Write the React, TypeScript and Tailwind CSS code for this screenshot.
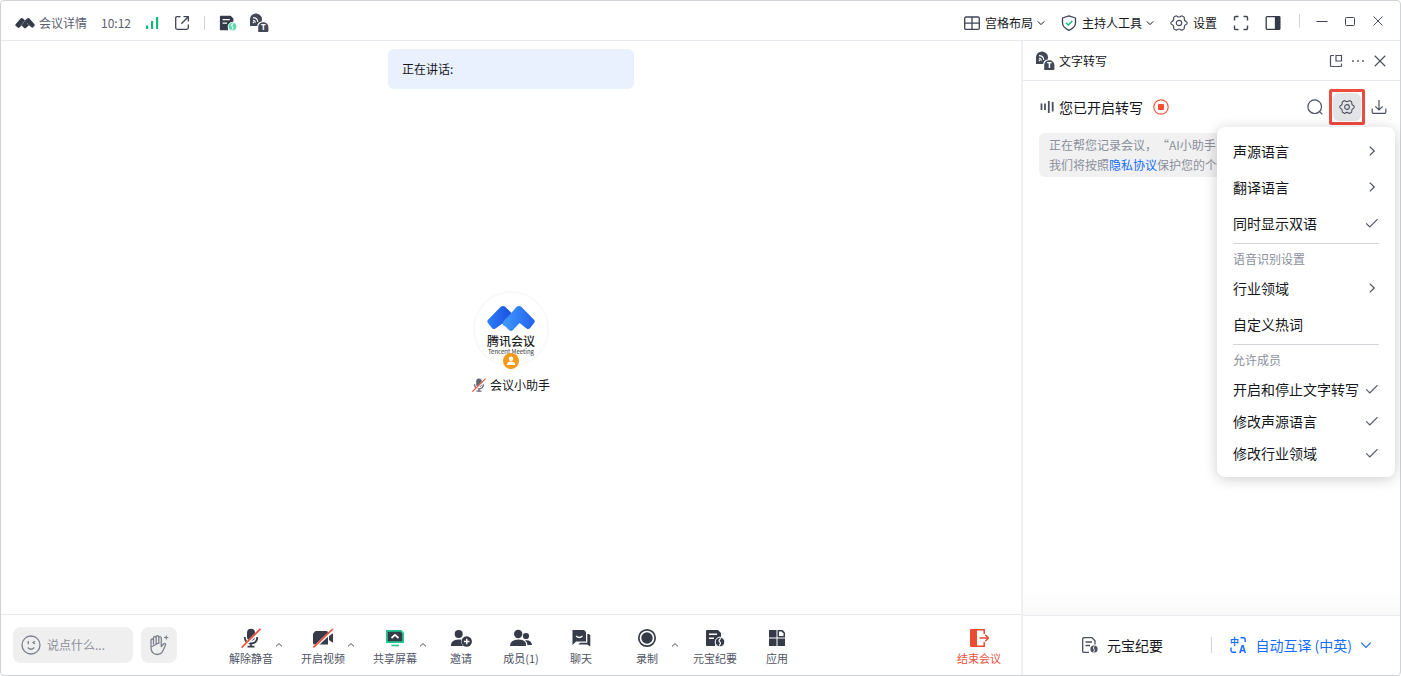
import React from "react";

type IconProps = { className?: string };

function Chevron({ dir = "down", className = "size-2" }: { dir?: "down" | "up" | "right"; className?: string }) {
  const paths = { down: "M0.8 2.4 4 5.6 7.2 2.4", up: "M1 5.4 4 2.6 7 5.4", right: "M2.2 0.5 5.8 4 2.2 7.5" };
  return (
    <svg viewBox="0 0 8 8" className={className} fill="none" stroke="currentColor" strokeWidth="1" aria-hidden="true">
      <path d={paths[dir]} />
    </svg>
  );
}

function Check() {
  return (
    <svg viewBox="0 0 14 14" className="size-3.5" fill="none" stroke="#4e5366" strokeWidth="1.1" aria-hidden="true">
      <path d="M1.2 7.4 4.8 11 12.6 3.2" />
    </svg>
  );
}

function BrandMark() {
  return (
    <svg viewBox="0 0 20 12" className="h-3 w-5" fill="#363b4a" aria-hidden="true">
      <path d="M5.600 1.500Q6.800.3 8 1.500L10 3.600 12 1.500Q13.200.3 14.400 1.500L19.500 7.200Q20.100 8 19.400 8.800L18.200 10.300Q17.300 11.200 16.400 10.300L14 8.200 10.900 11Q10 11.800 9.100 11L6.600 8.600 4.400 10.500Q3.400 11.300 2.600 10.500L.6 8.800Q-.1 8 .6 7.200Z" />
      <path d="M10 3.600 6.200 8.400M14 8.200 12 6" stroke="#fff" strokeWidth=".5" opacity=".6" />
    </svg>
  );
}

function SignalIcon() {
  return (
    <svg viewBox="0 0 15 14" className="h-3.5 w-[15px]" fill="#16b878" aria-hidden="true">
      <rect x="1" y="9.500" width="2.200" height="3.500" />
      <rect x="6" y="5" width="2.200" height="8" />
      <rect x="11" y="1" width="2.200" height="12" />
    </svg>
  );
}

function ShareOutIcon() {
  return (
    <svg viewBox="0 0 16 16" className="size-4" fill="none" stroke="#3f4454" strokeWidth="1.3" aria-hidden="true">
      <path d="M6.500 1.700H3.200Q1.700 1.700 1.700 3.200V12.800Q1.700 14.300 3.200 14.300H12.800Q14.300 14.300 14.300 12.800V9.500" />
      <path d="M9.500 1.700H14.300V6.500M14.300 1.700 7.300 8.700" />
    </svg>
  );
}

function NotesIcon({ accent = "#363b4a", className = "size-5" }: { accent?: string; className?: string }) {
  return (
    <svg viewBox="0 0 20 20" className={className} aria-hidden="true">
      <path d="M2 2H13L16 5V9Q10 9 10 18H2Q1 18 1 17V3Q1 2 2 2Z" fill="#363b4a" />
      <path d="M4 6.200H12M4 10.200H9" stroke="#fff" strokeWidth="1.400" />
      <circle cx="15" cy="14" r="4.800" fill={accent} stroke="#fff" strokeWidth="1" />
      <path d="M16 10.500Q12.800 12.300 14.800 14Q16.500 15.500 14 17.500" fill="none" stroke="#fff" strokeWidth="1.200" />
    </svg>
  );
}

function NotesOutlineIcon() {
  return (
    <svg viewBox="0 0 18 18" className="size-[18px]" fill="none" stroke="#4b5060" strokeWidth="1.300" aria-hidden="true">
      <path d="M8 16.300H2.700Q1.700 16.300 1.700 15.300V2.700Q1.700 1.700 2.700 1.700H11L14 4.700V8.500M4.500 6H11M4.500 9.500H9" />
      <circle cx="13" cy="13" r="3.600" fill="#4b5060" stroke="none" />
      <path d="M13.300 10.200Q11.500 12 13 13.200Q14 14.500 12.500 16" stroke="#fff" strokeWidth="1" />
    </svg>
  );
}

function TranscribeIcon({ className = "size-5" }: IconProps) {
  return (
    <svg viewBox="0 0 20 20" className={className} aria-hidden="true">
      <path d="M1 13V7A6 6 0 1 1 12.600 8.500Q8.500 9 8.200 13Z" fill="#434857" />
      <path d="M4 4.600Q8.500 4.600 8.800 9M4 7.300Q6.200 7.300 6.400 9.600" fill="none" stroke="#fff" strokeWidth="1.100" />
      <circle cx="4.500" cy="9.400" r=".8" fill="#fff" />
      <path d="M9.200 19V14A5 5 0 0 1 14.200 9.200A5 5 0 0 1 19.400 14V18Q19.400 19 18.400 19Z" fill="#434857" />
      <text x="14.300" y="17.300" fontSize="8" fontWeight="700" textAnchor="middle" fill="#fff" fontFamily="Noto Sans, sans-serif">T</text>
    </svg>
  );
}

function GearIcon({ className = "size-[18px]" }: IconProps) {
  return (
    <svg viewBox="0 0 18 18" className={className} fill="none" stroke="#4b5060" strokeWidth="1.200" strokeLinejoin="round" aria-hidden="true">
      <path d="M5.800 2 Q6.500 1.600 7 2.200 Q9 3.800 11 2.200 Q11.500 1.600 12.200 2 L14 3.100 Q14.500 3.500 14.300 4.200 Q14 6.800 16.400 7.700 Q17.100 8 17.100 9 Q17.100 10 16.400 10.300 Q14 11.200 14.300 13.800 Q14.500 14.500 14 14.900 L12.200 16 Q11.500 16.400 11 15.800 Q9 14.200 7 15.800 Q6.500 16.400 5.800 16 L4 14.900 Q3.500 14.500 3.700 13.800 Q4 11.200 1.600 10.300 Q.9 10 .9 9 Q.9 8 1.600 7.700 Q4 6.800 3.700 4.200 Q3.500 3.500 4 3.100Z" />
      <circle cx="9" cy="9" r="2.700" />
    </svg>
  );
}

function GridIcon() {
  return (
    <svg viewBox="0 0 16 16" className="size-4" fill="none" stroke="#3f4454" strokeWidth="1.300" aria-hidden="true">
      <rect x=".7" y="2" width="14.600" height="12.300" rx="1.200" />
      <path d="M8 2V14.300M.7 8.100H15.300" />
    </svg>
  );
}

function ShieldIcon() {
  return (
    <svg viewBox="0 0 16 16" className="size-4" fill="none" aria-hidden="true">
      <path d="M8 .9 14.500 3V8Q14.500 12.500 8 15.300Q1.500 12.500 1.500 8V3Z" stroke="#3f4454" strokeWidth="1.300" strokeLinejoin="round" />
      <path d="M5 7.700 7.300 10 11.300 6" stroke="#16b878" strokeWidth="1.400" />
    </svg>
  );
}

function MicOffIcon({ className = "size-5", body = "#363b4a" }: { className?: string; body?: string }) {
  return (
    <svg viewBox="0 0 20 20" className={className} fill="none" aria-hidden="true">
      <rect x="6" y=".8" width="8" height="12" rx="4" fill={body} />
      <path d="M3.700 9Q4 15.500 10 15.500T16.300 9M10 15.500V19M6.500 18.700H13.500" stroke={body} strokeWidth="1.800" />
      <path d="M1 20 19.700 1.800" stroke="#fff" strokeWidth="3" />
      <path d="M.6 19.500 19.500 .8" stroke="#f04e37" strokeWidth="1.700" />
    </svg>
  );
}

function CameraOffIcon() {
  return (
    <svg viewBox="0 0 22 20" className="h-5 w-[22px]" fill="none" aria-hidden="true">
      <path d="M3.500 3H14.500Q16 3 16 4.500V16.500H2.500Q1 16.500 1 15V5.500Z" fill="#363b4a" />
      <path d="M17 8 20.500 5.500Q21 5.500 21 6V14.200Q21 14.800 20.500 14.500L17 12Z" fill="#363b4a" />
      <path d="M2 19.800 21.300 1.500" stroke="#fff" strokeWidth="3" />
      <path d="M1.500 19.300 20.800 1" stroke="#f04e37" strokeWidth="1.700" />
    </svg>
  );
}

function ScreenIcon() {
  return (
    <svg viewBox="0 0 20 20" className="size-5" fill="none" aria-hidden="true">
      <path d="M1.900 2.900H16L18.100 5V14.100H1.900Z" fill="#363b4a" stroke="#23c98a" strokeWidth="1.800" />
      <path d="M6.500 10 10 6.800 13.500 10" stroke="#fff" strokeWidth="1.700" />
      <path d="M6.500 17.500H14" stroke="#23c98a" strokeWidth="1.600" />
    </svg>
  );
}

function InviteIcon() {
  return (
    <svg viewBox="0 0 22 20" className="h-5 w-[22px]" fill="#363b4a" aria-hidden="true">
      <circle cx="8.700" cy="6" r="4" />
      <path d="M.8 18Q.8 11.500 8.500 11.500H11Q10.800 16 13 18Z" />
      <circle cx="16.700" cy="13.500" r="5.200" />
      <path d="M16.700 10.700V16.300M13.900 13.500H19.500" stroke="#fff" strokeWidth="1.500" />
    </svg>
  );
}

function MembersIcon() {
  return (
    <svg viewBox="0 0 22 20" className="h-5 w-[22px]" fill="#363b4a" aria-hidden="true">
      <circle cx="8.200" cy="6" r="4.200" />
      <path d="M0 18Q0 11.500 8.500 11.500T16 18Z" />
      <circle cx="16" cy="8" r="3.100" />
      <path d="M15 12.400Q21.500 11.700 22 17H17.500Q17.500 14 15 12.400Z" />
    </svg>
  );
}

function ChatIcon() {
  return (
    <svg viewBox="0 0 20 20" className="size-5" fill="#363b4a" aria-hidden="true">
      <path d="M1.500 2H13L15 4V13.500H5L1.500 17Z" />
      <path d="M5 8Q8.200 11 11.500 8" fill="none" stroke="#fff" strokeWidth="1.300" />
      <path d="M16.300 6H18L19.300 7.300V18.500L16.200 16.500H7.500L9 14.800H16.300Z" />
    </svg>
  );
}

function RecordIcon() {
  return (
    <svg viewBox="0 0 20 20" className="size-5" fill="none" aria-hidden="true">
      <circle cx="10" cy="10" r="8.200" stroke="#363b4a" strokeWidth="1.700" />
      <circle cx="10" cy="10" r="5.700" fill="#363b4a" />
    </svg>
  );
}

function AppsIcon() {
  return (
    <svg viewBox="0 0 20 20" className="size-5" fill="#363b4a" aria-hidden="true">
      <path d="M2 2H9.500V9.500H2ZM2 10.500H9.500V18H2ZM10.500 10.500H18V18H10.500Z" />
      <path d="M10.500 2H15.500L18 4.500V9.500H10.500Z" />
      <path d="M12 3.500H14.500L16.500 5.500V8H12Z" fill="#fff" />
    </svg>
  );
}

function LeaveIcon() {
  return (
    <svg viewBox="0 0 20 20" className="size-5" fill="none" aria-hidden="true">
      <path d="M8 1V19H2Q1 19 1 18V2Q1 1 2 1Z" fill="#ec4b33" />
      <path d="M7 1.800H15.200V6M15.200 14V18.200H7" stroke="#ec4b33" strokeWidth="1.500" />
      <path d="M10.500 10H19.500M16.300 6.800 19.500 10 16.300 13.200" stroke="#ec4b33" strokeWidth="1.500" />
    </svg>
  );
}

function SmileIcon() {
  return (
    <svg viewBox="0 0 20 20" className="size-5" fill="none" stroke="#7d818d" strokeWidth="1.300" aria-hidden="true">
      <circle cx="10" cy="10" r="9" />
      <path d="M7.300 6V9.300M14 6.200 12 7.600 14 9M6.800 12.500Q10 16 13.300 12.500" />
    </svg>
  );
}

function HandIcon() {
  return (
    <svg viewBox="0 0 20 22" className="h-[22px] w-5" fill="none" stroke="#7d818d" strokeWidth="1.300" strokeLinejoin="round" aria-hidden="true">
      <path d="M2 13V6.500Q2 5 3.200 5T4.500 6.500V10.500M4.500 10V4Q4.500 2.500 5.800 2.500T7.200 4V10M7.200 9V3Q7.200 1.700 8.500 1.700T9.800 3V10M9.800 9V4Q9.800 2.800 11 2.800T12.300 4V12.500L14.800 9.800Q15.800 8.900 16.500 9.800Q17 10.500 16.300 11.500L13.500 17.500Q11.800 20.500 8.500 20.500Q2 20.500 2 13Z" />
      <path d="M17.200 .8 17.900 2.800 19.900 3.500 17.900 4.200 17.200 6.200 16.500 4.200 14.500 3.500 16.500 2.800Z" fill="#7d818d" stroke="none" />
    </svg>
  );
}

function TranslateIcon() {
  return (
    <svg viewBox="0 0 18 18" className="size-[18px] overflow-visible" aria-hidden="true">
      <text x="1" y="8.500" fontSize="9" fontWeight="700" fill="#146dff" fontFamily="Noto Sans CJK SC, sans-serif">中</text>
      <text x="10" y="17" fontSize="10" fontWeight="700" fill="#146dff" fontFamily="Noto Sans, sans-serif">A</text>
      <path d="M11.500 1.800H14.500Q16.200 1.800 16.200 3.500V6M2 11.500V14.500Q2 16.200 3.700 16.200H7" fill="none" stroke="#146dff" strokeWidth="1.400" />
    </svg>
  );
}

function CloseIcon({ className = "size-3" }: IconProps) {
  return (
    <svg viewBox="0 0 12 12" className={className} fill="none" stroke="#4b5060" strokeWidth="1" aria-hidden="true">
      <path d="M1.500 1.500 10.500 10.500M10.500 1.500 1.500 10.500" />
    </svg>
  );
}

function TitleBar() {
  return (
    <header className="flex h-10 shrink-0 items-center justify-between border-b border-[#e8e8ee] pl-3.5 pr-4 pt-1">
      <div className="flex items-center gap-3.5">
        <button className="flex items-center gap-1 text-[#5b6070]"><BrandMark />会议详情</button>
        <span className="text-[#5b6070]">10:12</span>
        <SignalIcon />
        <button aria-label="分享"><ShareOutIcon /></button>
        <span className="h-3.5 w-px bg-[#d3d5da]" />
        <div className="flex items-center gap-3">
          <button aria-label="元宝纪要"><NotesIcon accent="#5fd9ae" className="size-[18px]" /></button>
          <button aria-label="文字转写"><TranscribeIcon /></button>
        </div>
      </div>
      <div className="flex items-center gap-[18px]">
        <div className="flex items-center gap-4">
          <button className="flex items-center gap-[5px]"><GridIcon /><span className="flex items-center gap-1">宫格布局<Chevron /></span></button>
          <button className="flex items-center gap-[5px]"><ShieldIcon /><span className="flex items-center gap-1">主持人工具<Chevron /></span></button>
          <button className="flex items-center gap-[5px]"><GearIcon />设置</button>
          <button aria-label="全屏">
            <svg viewBox="0 0 16 16" className="size-4" fill="none" stroke="#3f4454" strokeWidth="1.400">
              <path d="M5.500 1.500H2.500Q1.500 1.500 1.500 2.500V5.500M10.500 1.500H13.500Q14.500 1.500 14.500 2.500V5.500M14.500 10.500V13.500Q14.500 14.500 13.500 14.500H10.500M1.500 10.500V13.500Q1.500 14.500 2.500 14.500H5.500" />
            </svg>
          </button>
          <button aria-label="侧边栏">
            <svg viewBox="0 0 16 16" className="size-4" fill="none" stroke="#363b4a" strokeWidth="1.300">
              <rect x="1.200" y="1.700" width="13.600" height="12.600" rx=".8" />
              <path d="M10.500 2H14.500V14H10.500Z" fill="#363b4a" />
            </svg>
          </button>
        </div>
        <div className="flex items-center gap-4 pb-1">
          <span className="h-3.5 w-px bg-[#d3d5da]" />
          <button aria-label="最小化">
            <svg viewBox="0 0 12 12" className="size-3" stroke="#3f4454"><path d="M.5 6.500H11.500" /></svg>
          </button>
          <button aria-label="最大化">
            <svg viewBox="0 0 12 12" className="size-3" fill="none" stroke="#3f4454"><rect x="1.500" y="2.500" width="9" height="8" rx="1" /></svg>
          </button>
          <button aria-label="关闭"><CloseIcon /></button>
        </div>
      </div>
    </header>
  );
}

function Stage() {
  return (
    <main className="flex flex-1 flex-col items-center pt-2">
      <div className="h-10 w-[246px] rounded-md bg-[#e9f1fe] px-3.5 leading-10">正在讲话:</div>
      <div className="flex flex-1 flex-col items-center justify-center gap-2.5 pb-5">
        <div className="relative flex size-[76px] flex-col items-center rounded-full border-2 border-[#f9f9fa] pt-3">
          <svg viewBox="0 0 48 28" className="h-7 w-12 shrink-0" aria-hidden="true">
            <defs>
              <linearGradient id="peakLeft" x1="0" y1="0" x2="1" y2="0"><stop offset="0" stopColor="#2f80fb" /><stop offset="1" stopColor="#1950de" /></linearGradient>
              <linearGradient id="peakRight" x1="0" y1="0" x2="1" y2="0"><stop offset="0" stopColor="#409afc" /><stop offset="1" stopColor="#2360ec" /></linearGradient>
            </defs>
            <path d="M14 1.500Q16 .3 18 1.500L24 7.500V16L17 21 15.500 18.500 8.500 23.500Q6.500 24.800 5 23.300L.8 17.800Q-.3 16.300 1 14.700Z" fill="url(#peakLeft)" />
            <path d="M30 1.500Q32 .3 34 1.500L47 14.700Q48.300 16.300 47.200 17.800L43 23.300Q41.500 24.800 39.500 23.500L32.500 18 26 25Q24 26.800 22 25L16.500 19.500Q15.500 18 16.800 16Z" fill="url(#peakRight)" />
          </svg>
          <span className="text-xs leading-4 font-medium text-[#222]">腾讯会议</span>
          <span className="text-[6px] leading-[6px] whitespace-nowrap text-[#333]">Tencent Meeting</span>
          <span className="absolute -bottom-1 left-1/2 flex size-4 -translate-x-1/2 items-center justify-center rounded-full bg-[#f39a1b]">
            <svg viewBox="0 0 10 10" className="size-2.5" fill="#fff" aria-hidden="true">
              <circle cx="5" cy="2.700" r="2.200" />
              <path d="M.8 9Q.8 5.600 5 5.600T9.200 9Z" />
            </svg>
          </span>
        </div>
        <div className="flex items-center gap-1 leading-4"><MicOffIcon className="size-3.5" body="#5f6472" />会议小助手</div>
      </div>
    </main>
  );
}

function Tool({ icon, label, width = "w-[60px]", menu = false }: { icon: React.ReactNode; label: string; width?: string; menu?: boolean }) {
  if (menu) {
    return (
      <div className="flex w-[72px] items-center pl-3.5">
        <button className="flex w-11 flex-col items-center gap-0.5 whitespace-nowrap">{icon}{label}</button>
        <button className="flex w-3 justify-center pb-1" aria-label={label + "选项"}><Chevron dir="up" /></button>
      </div>
    );
  }
  return <button className={"flex flex-col items-center gap-0.5 whitespace-nowrap " + width}>{icon}{label}</button>;
}

function Toolbar() {
  return (
    <footer className="flex h-[61px] shrink-0 items-center border-t border-[#e8e8ee] pl-3 pr-2">
      <label className="flex h-9 w-[120px] items-center gap-1.5 rounded-lg bg-[#efefef] pl-2">
        <SmileIcon />
        <input aria-label="说点什么" placeholder="说点什么..." className="w-20 bg-transparent outline-none placeholder:text-[#8b8f9a]" />
      </label>
      <button aria-label="举手" className="ml-2 flex h-9 w-9 items-center justify-center rounded-lg bg-[#efefef]"><HandIcon /></button>
      <div className="flex flex-1 items-center pl-[38px] pt-1 text-[11px] leading-4 text-[#4f5463]">
        <Tool icon={<MicOffIcon />} label="解除静音" menu />
        <Tool icon={<CameraOffIcon />} label="开启视频" menu />
        <Tool icon={<ScreenIcon />} label="共享屏幕" menu />
        <Tool icon={<InviteIcon />} label="邀请" />
        <Tool icon={<MembersIcon />} label="成员(1)" />
        <Tool icon={<ChatIcon />} label="聊天" />
        <Tool icon={<RecordIcon />} label="录制" menu />
        <Tool icon={<NotesIcon />} label="元宝纪要" width="w-16" />
        <Tool icon={<AppsIcon />} label="应用" />
        <button className="ml-auto flex w-[68px] flex-col items-center gap-0.5 text-[#e5533f]"><LeaveIcon />结束会议</button>
      </div>
    </footer>
  );
}

function MenuItem({ label, mark, compact = false }: { label: string; mark?: "more" | "check"; compact?: boolean }) {
  return (
    <button className={"flex w-full items-center justify-between whitespace-nowrap " + (compact ? "h-8" : "h-9")}>
      {label}
      {mark === "more" && <Chevron dir="right" className="mr-0.5 size-2.5 text-[#4e5366]" />}
      {mark === "check" && <Check />}
    </button>
  );
}

function SettingsMenu() {
  return (
    <div className="absolute top-[35px] right-[-33px] z-10 w-[178px] rounded-lg bg-white px-4 pt-1.5 pb-2 text-sm shadow-[0_2px_14px_rgba(0,0,0,0.2)]">
      <MenuItem label="声源语言" mark="more" />
      <MenuItem label="翻译语言" mark="more" />
      <MenuItem label="同时显示双语" mark="check" />
      <div className="mt-0.5 h-px bg-[#d3d5da]" />
      <div className="h-[26px] pt-1 text-xs leading-[22px] text-[#8b8f9a]">语音识别设置</div>
      <MenuItem label="行业领域" mark="more" />
      <MenuItem label="自定义热词" />
      <div className="mt-0.5 h-px bg-[#d3d5da]" />
      <div className="h-7 pt-1 text-xs leading-[22px] text-[#8b8f9a]">允许成员</div>
      <MenuItem label="开启和停止文字转写" mark="check" compact />
      <MenuItem label="修改声源语言" mark="check" compact />
      <MenuItem label="修改行业领域" mark="check" compact />
    </div>
  );
}

function TranscriptPanel() {
  return (
    <aside className="flex w-[379px] shrink-0 flex-col border-l-2 border-[#f0f0f3]">
      <div className="flex h-10 shrink-0 items-center justify-between border-b border-[#e8e8ee] pr-[13px] pl-3">
        <h2 className="flex items-center gap-1"><TranscribeIcon />文字转写</h2>
        <div className="flex items-center gap-2">
          <button aria-label="弹出窗口">
            <svg viewBox="0 0 14 14" className="size-3.5" fill="none" stroke="#4b5060" strokeWidth="1.200">
              <path d="M5 1.500H2.500Q1.500 1.500 1.500 2.500V11.500Q1.500 12.500 2.500 12.500H11.500Q12.500 12.500 12.500 11.500V9.500M7 1.500H12.500V7H7Z" />
            </svg>
          </button>
          <button aria-label="更多">
            <svg viewBox="0 0 14 14" className="size-3.5" fill="#4b5060"><circle cx="2" cy="7" r=".9" /><circle cx="7" cy="7" r=".9" /><circle cx="12" cy="7" r=".9" /></svg>
          </button>
          <button aria-label="关闭文字转写"><CloseIcon className="size-3.5" /></button>
        </div>
      </div>
      <div className="flex h-[52px] shrink-0 items-center gap-2.5 pr-[13px] pl-4">
        <span className="flex items-center gap-1 text-sm">
          <svg viewBox="0 0 16 16" className="size-4" stroke="#4b5060" strokeWidth="1.800" aria-hidden="true">
            <path d="M2.500 4.500V11M6 4.500V11M9.800 2V14M13.700 3V12.500" />
          </svg>
          您已开启转写
        </span>
        <button aria-label="停止转写">
          <svg viewBox="0 0 16 16" className="size-4">
            <circle cx="8" cy="8" r="7.200" fill="none" stroke="#f8553d" strokeWidth="1.200" />
            <rect x="5" y="5" width="6" height="6" rx=".8" fill="#fa4d2d" />
          </svg>
        </button>
        <div className="ml-auto flex items-center gap-1.5">
          <button aria-label="搜索">
            <svg viewBox="0 0 16 16" className="size-4" fill="none" stroke="#4b5060" strokeWidth="1.200"><circle cx="7.700" cy="7.700" r="6.800" /><path d="M12.600 12.600 15.300 15.300" /></svg>
          </button>
          <div className="relative rounded-xs border-3 border-[#ee4b40] p-px">
            <button aria-label="转写设置" aria-expanded="true" className="flex size-7 items-center justify-center rounded-md bg-[#e3e4e8]"><GearIcon className="size-4" /></button>
            <SettingsMenu />
          </div>
          <button aria-label="导出">
            <svg viewBox="0 0 16 16" className="size-4" fill="none" stroke="#4b5060" strokeWidth="1.200"><path d="M8 1V11M4.300 7.300 8 11 11.700 7.300M1.200 9.500V13.300Q1.200 14.300 2.200 14.300H13.800Q14.800 14.300 14.800 13.300V9.500" /></svg>
          </button>
        </div>
      </div>
      <p className="mr-4 ml-4 overflow-hidden rounded-md bg-[#f1f1f2] px-2.5 py-0.5 leading-5 whitespace-nowrap text-[#8b8f9a] [text-spacing-trim:space-all]">
        正在帮您记录会议，“AI小助手<br />
        我们将按照<a href="#privacy" className="text-[#146dff]">隐私协议</a>保护您的个
      </p>
      <div className="mt-auto h-7 bg-linear-to-b from-white to-[#f9f9f9]" />
      <div className="flex h-[60px] shrink-0 items-center border-t border-[#e8e8ee] pr-7 pb-0.5 pl-[58px] text-sm">
        <button className="flex items-center gap-2"><NotesOutlineIcon />元宝纪要</button>
        <div className="ml-auto flex items-center gap-[17px]">
          <span className="h-4 w-px bg-[#d3d5da]" />
          <button className="flex items-center gap-2 text-[#146dff]"><TranslateIcon />自动互译 (中英)<Chevron className="size-3 [stroke-width:0.8px]" /></button>
        </div>
      </div>
    </aside>
  );
}

export default function App() {
  return (
    <div lang="zh-CN" className="flex min-h-screen flex-col rounded-sm border border-[#d0d2d7] bg-white font-['Noto_Sans_CJK_SC','Noto_Sans',sans-serif] text-xs text-[#15171c]">
      <TitleBar />
      <div className="flex flex-1">
        <div className="flex min-w-0 flex-1 flex-col">
          <Stage />
          <Toolbar />
        </div>
        <TranscriptPanel />
      </div>
    </div>
  );
}
